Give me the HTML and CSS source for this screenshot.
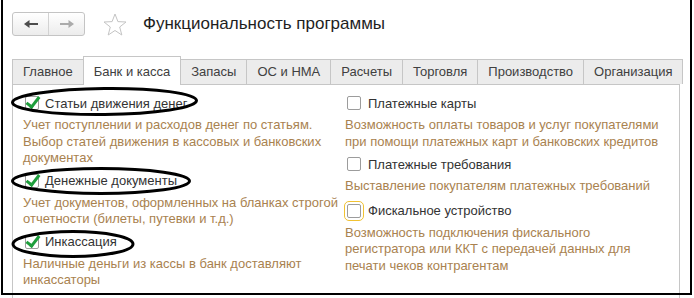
FILE: index.html
```html
<!DOCTYPE html>
<html lang="ru">
<head>
    <meta charset="UTF-8">
    <title>Функциональность программы</title>
    <link rel="stylesheet" href="styles.css">
</head>
<body>
    <div class="screen">
        <!-- Window header -->
        <div class="header">
            <div class="nav">
                <button class="nav-btn back">
                    <svg width="14" height="8" viewBox="0 0 14 8"><path d="M0 4L5.5 0V3H14V5H5.5V8Z"/></svg>
                </button>
                <button class="nav-btn forward">
                    <svg width="14" height="8" viewBox="0 0 14 8"><path d="M14 4L8.5 0V3H0V5H8.5V8Z"/></svg>
                </button>
            </div>
            <svg class="star" width="24" height="23" viewBox="0 0 24 23">
                <path d="M12 1L14.9 8.6L23 9L16.7 14L18.8 22L12 17.5L5.2 22L7.3 14L1 9L9.1 8.6Z"/>
            </svg>
            <h1 class="title">Функциональность программы</h1>
        </div>

        <!-- Tabs -->
        <div class="tabs">
            <div class="tab">Главное</div>
            <div class="tab active">Банк и касса</div>
            <div class="tab">Запасы</div>
            <div class="tab">ОС и НМА</div>
            <div class="tab">Расчеты</div>
            <div class="tab">Торговля</div>
            <div class="tab">Производство</div>
            <div class="tab">Организация</div>
        </div>

        <div class="panel">
            <div class="column left">
                <div class="option">
                    <div class="option-row"><span class="checkbox checked"></span>Статьи движения денег</div>
                    <div class="option-desc">Учет поступлении и расходов денег по статьям.<br>Выбор статей движения в кассовых и банковских<br>документах</div>
                </div>
                <div class="option">
                    <div class="option-row"><span class="checkbox checked"></span>Денежные документы</div>
                    <div class="option-desc">Учет документов, оформленных на бланках строгой<br>отчетности (билеты, путевки и т.д.)</div>
                </div>
                <div class="option">
                    <div class="option-row"><span class="checkbox checked"></span>Инкассация</div>
                    <div class="option-desc">Наличные деньги из кассы в банк доставляют<br>инкассаторы</div>
                </div>
            </div>
            <div class="column right">
                <div class="option">
                    <div class="option-row"><span class="checkbox"></span>Платежные карты</div>
                    <div class="option-desc">Возможность оплаты товаров и услуг покупателями<br>при помощи платежных карт и банковских кредитов</div>
                </div>
                <div class="option">
                    <div class="option-row"><span class="checkbox"></span>Платежные требования</div>
                    <div class="option-desc">Выставление покупателям платежных требований</div>
                </div>
                <div class="option focused">
                    <div class="option-row"><span class="checkbox"></span>Фискальное устройство</div>
                    <div class="option-desc">Возможность подключения фискального<br>регистратора или ККТ с передачей данных для<br>печати чеков контрагентам</div>
                </div>
            </div>
        </div>

        <!-- Hand-drawn marks over the screenshot -->
        <svg class="marks" width="694" height="298" viewBox="0 0 694 298">
            <ellipse cx="104.5" cy="101.5" rx="92" ry="13" transform="rotate(-0.6 104.5 101.5)"/>
            <ellipse cx="101" cy="181" rx="88.5" ry="12.5"/>
            <ellipse cx="73" cy="244" rx="60" ry="12.5"/>
        </svg>
        <div class="frame"></div>
    </div>
</body>
</html>
```

FILE: styles.css
```css
/* Basic Reset */
* {
    margin: 0;
    padding: 0;
    box-sizing: border-box;
}

body {
    font-family: 'Liberation Sans', Arial, sans-serif;
    background: #fff;
}

.screen {
    position: relative;
    width: 694px;
    height: 298px;
    overflow: hidden;
    padding: 12px 0 0 12px;
    background: #fff;
}

/* Header */
.header {
    display: flex;
    align-items: center;
    height: 24px;
}

.nav {
    display: flex;
    width: 73px;
    height: 24px;
    border: 1px solid #c4c4c4;
    border-radius: 3px;
    background: linear-gradient(#ffffff, #ececec);
}

.nav-btn {
    flex: 1;
    display: flex;
    align-items: center;
    justify-content: center;
    border: none;
    background: none;
}

.nav-btn.back {
    border-right: 1px solid #d2d2d2;
}

.nav-btn.back svg {
    fill: #4d4d4d;
}

.nav-btn.forward svg {
    fill: #ababab;
}

.star {
    margin-left: 18px;
    fill: none;
    stroke: #c4c4c4;
    stroke-width: 1;
}

.title {
    margin-left: 16px;
    font-size: 17px;
    font-weight: normal;
    color: #1e1e1e;
}

/* Tabs */
.tabs {
    display: flex;
    align-items: flex-end;
    margin-top: 20px;
    position: relative;
    z-index: 1;
}

.tab {
    height: 25px;
    padding: 0 10px;
    border: 1px solid #c6c6c6;
    border-bottom: none;
    margin-left: -1px;
    background: #ececec;
    font-size: 13px;
    line-height: 24px;
    color: #404040;
    white-space: nowrap;
}

.tab:first-child {
    margin-left: 0;
}

.tab.active {
    height: 29px;
    padding-top: 3px;
    margin-bottom: -1px;
    background: #fff;
}

/* Panel */
.panel {
    display: flex;
    width: 668px;
    height: 260px;
    border: 1px solid #c6c6c6;
    padding: 8px 0 0 10px;
}

.column {
    display: flex;
    flex-direction: column;
    gap: 4px;
}

.column.left {
    width: 322px;
}

.option-row {
    display: flex;
    align-items: center;
    height: 20px;
    font-size: 13px;
    color: #333;
    white-space: nowrap;
}

.option-desc {
    margin-top: 4px;
    font-size: 13px;
    line-height: 16.5px;
    color: #a9824f;
    white-space: nowrap;
}

.checkbox {
    position: relative;
    width: 14px;
    height: 14px;
    margin: 0 7px 0 2px;
    border: 1px solid #9c9c9c;
    border-radius: 2px;
    background: #fff;
}

.checkbox.checked {
    margin-right: 6px;
}

.checkbox.checked::after {
    content: "";
    position: absolute;
    left: 3px;
    top: -3px;
    width: 5px;
    height: 11px;
    border: solid #1e9e3c;
    border-width: 0 3px 3px 0;
    transform: rotate(38deg);
}

.focused .checkbox {
    outline: 1px solid #f1c232;
    outline-offset: 2px;
}

.focused {
    margin-top: 2px;
}

/* Annotation overlay */
.marks {
    position: absolute;
    top: 0;
    left: 0;
    fill: none;
    stroke: #000;
    stroke-width: 3;
    pointer-events: none;
}

.frame {
    position: absolute;
    top: 0;
    left: 1px;
    width: 691px;
    height: 295px;
    border: 2px solid #000;
    border-top: none;
}
```
